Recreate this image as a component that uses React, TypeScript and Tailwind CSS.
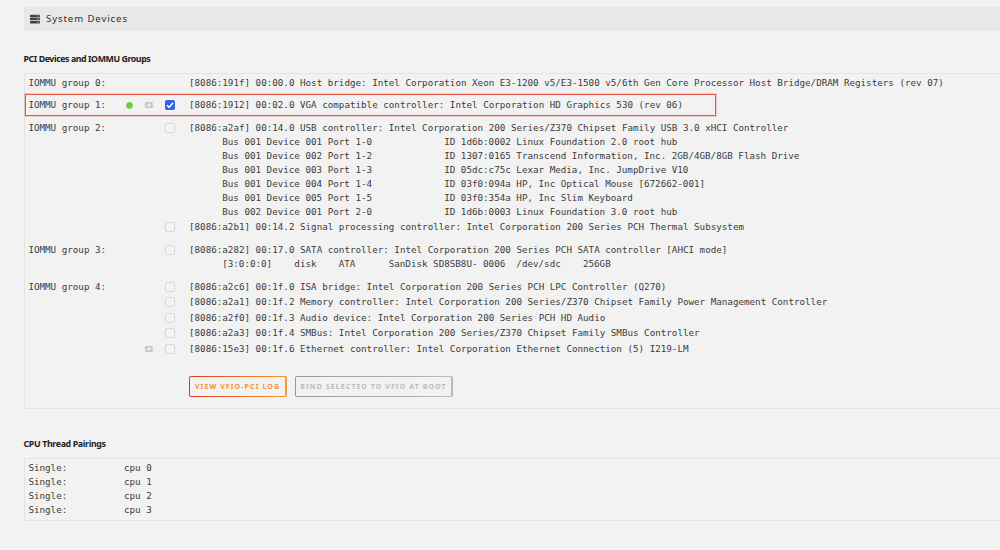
import clsx from 'clsx';
import { FaCircle, FaServer } from 'react-icons/fa';

interface Device {
  text: string;
  resettable?: boolean;
  bound?: boolean;
  checkbox?: 'on' | 'off';
  children?: string[];
}

interface Group {
  label: string;
  className: string;
  rowClassName: string;
  devices: Device[];
}

const groups: Group[] = [
  {
    label: 'IOMMU group 0:',
    className: 'h-[20px] pt-[1px]',
    rowClassName: 'h-[15px]',
    devices: [
      {
        text: '[8086:191f] 00:00.0 Host bridge: Intel Corporation Xeon E3-1200 v5/E3-1500 v5/6th Gen Core Processor Host Bridge/DRAM Registers (rev 07)',
      },
    ],
  },
  {
    label: 'IOMMU group 1:',
    className: 'h-[22px] w-[691px] border border-[#ea5545] pt-[2px] shadow-[0_0_0_1px_rgba(234,85,69,0.25)]',
    rowClassName: 'h-[16px] -ml-px',
    devices: [
      {
        text: '[8086:1912] 00:02.0 VGA compatible controller: Intel Corporation HD Graphics 530 (rev 06)',
        bound: true,
        resettable: true,
        checkbox: 'on',
      },
    ],
  },
  {
    label: 'IOMMU group 2:',
    className: 'h-[125px] pt-[4px]',
    rowClassName: 'h-[15px]',
    devices: [
      {
        text: '[8086:a2af] 00:14.0 USB controller: Intel Corporation 200 Series/Z370 Chipset Family USB 3.0 xHCI Controller',
        checkbox: 'off',
        children: [
          'Bus 001 Device 001 Port 1-0             ID 1d6b:0002 Linux Foundation 2.0 root hub',
          'Bus 001 Device 002 Port 1-2             ID 1307:0165 Transcend Information, Inc. 2GB/4GB/8GB Flash Drive',
          'Bus 001 Device 003 Port 1-3             ID 05dc:c75c Lexar Media, Inc. JumpDrive V10',
          'Bus 001 Device 004 Port 1-4             ID 03f0:094a HP, Inc Optical Mouse [672662-001]',
          'Bus 001 Device 005 Port 1-5             ID 03f0:354a HP, Inc Slim Keyboard',
          'Bus 002 Device 001 Port 2-0             ID 1d6b:0003 Linux Foundation 3.0 root hub',
        ],
      },
      {
        text: '[8086:a2b1] 00:14.2 Signal processing controller: Intel Corporation 200 Series PCH Thermal Subsystem',
        checkbox: 'off',
      },
    ],
  },
  {
    label: 'IOMMU group 3:',
    className: 'h-[38px] pt-[1px]',
    rowClassName: 'h-[15px]',
    devices: [
      {
        text: '[8086:a282] 00:17.0 SATA controller: Intel Corporation 200 Series PCH SATA controller [AHCI mode]',
        checkbox: 'off',
        children: ['[3:0:0:0]    disk    ATA      SanDisk SD8SB8U- 0006  /dev/sdc    256GB'],
      },
    ],
  },
  {
    label: 'IOMMU group 4:',
    className: 'h-[97px]',
    rowClassName: 'h-[15.5px]',
    devices: [
      { text: '[8086:a2c6] 00:1f.0 ISA bridge: Intel Corporation 200 Series PCH LPC Controller (Q270)', checkbox: 'off' },
      { text: '[8086:a2a1] 00:1f.2 Memory controller: Intel Corporation 200 Series/Z370 Chipset Family Power Management Controller', checkbox: 'off' },
      { text: '[8086:a2f0] 00:1f.3 Audio device: Intel Corporation 200 Series PCH HD Audio', checkbox: 'off' },
      { text: '[8086:a2a3] 00:1f.4 SMBus: Intel Corporation 200 Series/Z370 Chipset Family SMBus Controller', checkbox: 'off' },
      {
        text: '[8086:15e3] 00:1f.6 Ethernet controller: Intel Corporation Ethernet Connection (5) I219-LM',
        checkbox: 'off',
        resettable: true,
      },
    ],
  },
];

const threads = ['cpu 0', 'cpu 1', 'cpu 2', 'cpu 3'];

function ResetIcon() {
  return (
    <svg viewBox="0 0 10 8" className="h-[8px] w-[10px] text-[#c2c2c2]" fill="currentColor">
      <path d="M2.3 .8 4.5 3.5H3v2h3.2l1.2 1.6H1.5V3.5H0z" />
      <path d="M7.7 7.2 5.5 4.5H7v-2H3.8L2.6 .9h5.9v3.6H10z" />
    </svg>
  );
}

function Checkbox({ checked }: { checked: boolean }) {
  return (
    <span
      role="checkbox"
      aria-checked={checked}
      className={clsx(
        'flex size-[10px] items-center justify-center rounded-[2px]',
        checked ? 'bg-[#2f62e0]' : 'border border-[#d8d8dc] bg-[#f4f4f4]',
      )}
    >
      {checked && (
        <svg viewBox="0 0 10 10" className="size-[10px]" fill="none" stroke="#fff" strokeWidth="1.5">
          <path d="M2 5.2 4.1 7.3 8.1 2.7" />
        </svg>
      )}
    </span>
  );
}

function DeviceRow({ label, device, className }: { label: string; device: Device; className: string }) {
  return (
    <div className={clsx('flex items-center whitespace-pre', className)}>
      <span className="w-[95px] pl-[3.4px]">{label}</span>
      <span className="flex w-[18px] justify-center">
        {device.bound && <FaCircle size={7} className="text-[#6ccb40]" />}
      </span>
      <span className="flex w-[21px] justify-center">{device.resettable && <ResetIcon />}</span>
      <span className="flex w-[30px] pl-[6px]">
        {device.checkbox && <Checkbox checked={device.checkbox === 'on'} />}
      </span>
      <span>{device.text}</span>
    </div>
  );
}

function GroupRows({ group }: { group: Group }) {
  return (
    <div className={group.className}>
      {group.devices.map((device, i) => (
        <div key={device.text}>
          <DeviceRow label={i === 0 ? group.label : ''} device={device} className={group.rowClassName} />
          {device.children?.map((line) => (
            <div key={line} className="h-[14px] pl-[197.2px] leading-[14px] whitespace-pre">
              {line}
            </div>
          ))}
        </div>
      ))}
    </div>
  );
}

export default function App() {
  return (
    <div className="h-[550px] w-[1000px] overflow-hidden bg-[#f2f2f2] pt-[7px] pl-[24px] font-['Noto_Sans',sans-serif] text-[#3c3c3c]">
      <header className="flex h-[24px] items-center bg-[#e8e8e8] pl-[6px]">
        <FaServer size={10} className="text-[#444]" />
        <h1 className="ml-[6px] text-[9.6px] tracking-[0.9px] text-[#303030]">System Devices</h1>
      </header>

      <h2 className="mt-[20px] -ml-[0.5px] h-[16px] text-[8.8px] leading-[16px] font-bold tracking-[-0.42px] text-[#222]">
        PCI Devices and IOMMU Groups
      </h2>

      <section className="mt-[6px] h-[336px] border border-r-0 border-[#e4e4e4] font-['DejaVu_Sans_Mono',monospace] text-[9.22px] leading-[14px]">
        {groups.map((group) => (
          <GroupRows key={group.label} group={group} />
        ))}
        <div className="flex gap-[8px] pl-[163.5px] font-['Noto_Sans',sans-serif] text-[7px] font-bold tracking-[1.1px]">
          <button className="h-[21px] w-[98px] rounded-[2px] bg-[linear-gradient(90deg,#dc3a22,#f79a35)] p-[1.3px]">
            <span className="flex h-full items-center justify-center rounded-[1px] bg-[#f2f2f2] whitespace-nowrap text-[#f0923a]">
              VIEW VFIO-PCI LOG
            </span>
          </button>
          <button className="h-[21px] w-[158px] rounded-[2px] bg-[linear-gradient(90deg,#999,#bbb)] p-[1.3px]" disabled>
            <span className="flex h-full items-center justify-center rounded-[1px] bg-[#f2f2f2] whitespace-nowrap text-[#bcbcbc]">
              BIND SELECTED TO VFIO AT BOOT
            </span>
          </button>
        </div>
      </section>

      <h2 className="mt-[27px] -ml-[0.5px] h-[16px] text-[8.8px] leading-[16px] font-bold tracking-[-0.34px] text-[#222]">
        CPU Thread Pairings
      </h2>

      <section className="mt-[6px] h-[63px] border border-r-0 border-[#e4e4e4] pt-[2px] font-['DejaVu_Sans_Mono',monospace] text-[9.22px] leading-[14px]">
        {threads.map((cpu) => (
          <div key={cpu} className="flex pl-[3.4px]">
            <span className="w-[95.6px]">Single:</span>
            <span>{cpu}</span>
          </div>
        ))}
      </section>
    </div>
  );
}
